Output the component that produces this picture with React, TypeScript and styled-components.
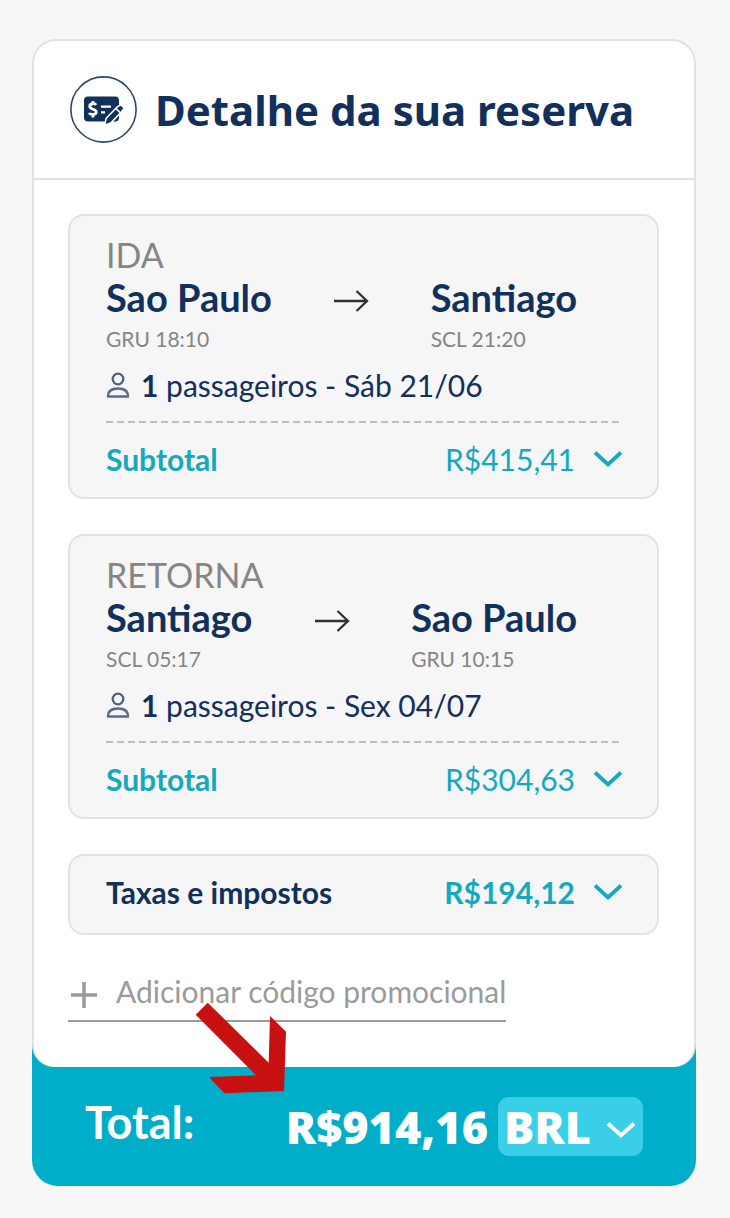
import React, { useState } from "react";
import styled, { createGlobalStyle } from "styled-components";

const navy = "#12305c";
const teal = "#14a9c0";
const bar = "#00aeca";
const line = "#e2e2e2";
const body = `Lato, "Liberation Sans", sans-serif`;
const display = `"Noto Sans", "Open Sans", sans-serif`;

const GlobalStyle = createGlobalStyle`
  * { box-sizing: border-box; }
  body { margin: 0; background: #f7f7f7; font-family: ${body}; color: ${navy}; }
  button, select { font: inherit; color: inherit; }
`;

const Page = styled.main`
  padding: 39px 34px 32px 32px;
`;

const Summary = styled.section`
  background: ${bar};
  border-radius: 26px;
`;

const Card = styled.div`
  background: #fff;
  border: 2px solid ${line};
  border-bottom: 0;
  border-radius: 24px 24px 22px 22px;
`;

/* Grey backing keeps the page colour behind the card's upper corners. */
const Backing = styled.div`
  background: linear-gradient(#f7f7f7 0 50%, transparent 50%);
`;

const Header = styled.header`
  display: flex;
  align-items: center;
  gap: 18px;
  height: 139px;
  padding: 0 36px;
  border-bottom: 2px solid ${line};
`;

const Title = styled.h1`
  margin: 0;
  font-family: ${display};
  font-size: 42px;
  line-height: 50px;
  font-weight: 700;
  white-space: nowrap;
`;

const Content = styled.div`
  display: flex;
  flex-direction: column;
  align-items: stretch;
  gap: 35px;
  padding: 34px 35px 45px 34px;
`;

const Panel = styled.section<{ $compact?: boolean }>`
  background: #f6f6f6;
  border: 2px solid ${line};
  border-radius: 16px;
  padding: ${(p) => (p.$compact ? "18px 34px 23px 36px" : "19px 34px 20px 36px")};
`;

const Direction = styled.h2`
  margin: 0;
  font-size: 34px;
  line-height: 40px;
  font-weight: 400;
  color: #858585;
`;

const Route = styled.div`
  display: flex;
  align-items: flex-start;
  justify-content: space-between;
  padding-right: 46px;
`;

const City = styled.div`
  font-size: 38px;
  line-height: 44px;
  font-weight: 700;
`;

const Schedule = styled.div`
  font-size: 21px;
  line-height: 40px;
  color: #858585;
`;

const ArrowBox = styled.span`
  display: flex;
  align-items: center;
  height: 52px;
`;

const Passengers = styled.p`
  display: flex;
  align-items: center;
  gap: 10px;
  margin: 8px 0 18px;
  font-size: 30px;
  line-height: 36px;
`;

const Divider = styled.hr`
  height: 2px;
  margin: 0 0 18px;
  border: 0;
  background: repeating-linear-gradient(90deg, #bdbdbd 0 7px, transparent 7px 11px);
`;

const AmountRow = styled.button<{ $strong?: boolean }>`
  display: flex;
  align-items: center;
  width: 100%;
  padding: 0;
  border: 0;
  background: none;
  font-size: 30px;
  line-height: 36px;
  text-align: left;
  font-weight: ${(p) => (p.$strong ? 700 : 400)};
  color: ${teal};
  cursor: pointer;
`;

const AmountLabel = styled.span<{ $dark?: boolean }>`
  flex: 1;
  font-weight: 700;
  color: ${(p) => (p.$dark ? navy : teal)};
`;

const Amount = styled.span`
  margin-right: 18px;
`;

const Promo = styled.button`
  display: flex;
  align-items: flex-end;
  align-self: flex-start;
  gap: 18px;
  margin-top: 3px;
  padding: 0 0 11px 2px;
  border: 0;
  border-bottom: 2px solid #9b9b9b;
  background: none;
  font-size: 30px;
  line-height: 36px;
  color: #9b9b9b;
  cursor: pointer;
`;

const Total = styled.footer`
  position: relative;
  display: flex;
  align-items: center;
  justify-content: space-between;
  height: 119px;
  padding: 0 53px;
  color: #fff;
  font-size: 45px;
  line-height: 54px;
`;

const TotalLabel = styled.span`
  padding-bottom: 10px;
  font-weight: 700;
`;

const TotalValue = styled.div`
  display: flex;
  align-items: center;
  gap: 10px;
  font-family: "Open Sans", "Noto Sans", sans-serif;
  font-weight: 800;
`;

const Currency = styled.label`
  display: grid;
  align-items: center;
  border-radius: 11px;
  background: #3acfe8;

  & > * { grid-area: 1 / 1; }
  & > svg { justify-self: end; margin: 6px 7px 0 0; pointer-events: none; }
`;

const CurrencySelect = styled.select`
  appearance: none;
  width: 145px;
  height: 59px;
  padding: 0 0 0 6px;
  border: 0;
  background: transparent;
  cursor: pointer;
`;

const Pointer = styled.svg`
  position: absolute;
  left: 163px;
  top: -65px;
  pointer-events: none;
`;

const Chevron = ({ color = teal }: { color?: string }) => (
  <svg width="30" height="18" viewBox="0 0 30 18" fill="none" aria-hidden="true">
    <path d="M2 2.5 15 14.5 28 2.5" stroke={color} strokeWidth="3.8" />
  </svg>
);

const RightArrow = () => (
  <svg width="36" height="24" viewBox="0 0 36 24" fill="none" aria-hidden="true">
    <path d="M1 12H34M23.500 2 34 12 23.500 22" stroke="#33312e" strokeWidth="2.300" />
  </svg>
);

const Person = () => (
  <svg width="25" height="28" viewBox="0 0 25 28" fill="none" aria-hidden="true">
    <circle cx="12" cy="8" r="5.300" stroke="#4f617f" strokeWidth="2.300" />
    <path
      d="M2 25.500C2 19.500 6.500 17.500 12 17.500S22 19.500 22 25.500Z"
      stroke="#5c6c88"
      strokeWidth="2.400"
      strokeLinejoin="round"
    />
  </svg>
);

const Plus = () => (
  <svg width="28" height="28" viewBox="0 0 28 28" fill="none" aria-hidden="true">
    <path d="M14 1V27M1 14H27" stroke="#9b9b9b" strokeWidth="3.600" />
  </svg>
);

const BookingIcon = () => (
  <svg width="67" height="67" viewBox="0 0 67 67" fill="none" aria-hidden="true">
    <circle cx="33.500" cy="33.500" r="32.600" stroke="#2c4770" strokeWidth="1.600" />
    <rect x="14" y="20.500" width="35" height="25" rx="4" fill={navy} />
    <path
      d="M26 29C25 27 19.700 27.200 19.700 30.300C19.700 34 26.200 32.500 26.200 36C26.200 39.300 20.400 39 19 37M22.900 25V28.500M22.900 38V41.500"
      stroke="#fff"
      strokeWidth="2.800"
    />
    <path d="M31 30.700H41M31 36.400H35" stroke="#fff" strokeWidth="2.300" />
    <path
      d="M34.500 49.500 36.200 42.300 47 31.200 50 29.200C51.800 28.800 54.300 31.300 53.800 33L51.500 35.800 41 46.800Z"
      fill={navy}
      stroke="#fff"
      strokeWidth="1.600"
    />
    <path d="M45.800 32.300 50.600 37.100" stroke="#fff" strokeWidth="1.500" />
  </svg>
);

type Leg = {
  direction: string;
  from: [string, string];
  to: [string, string];
  date: string;
  subtotal: string;
};

const legs: Leg[] = [
  { direction: "IDA", from: ["Sao Paulo", "GRU 18:10"], to: ["Santiago", "SCL 21:20"], date: "Sáb 21/06", subtotal: "R$415,41" },
  { direction: "RETORNA", from: ["Santiago", "SCL 05:17"], to: ["Sao Paulo", "GRU 10:15"], date: "Sex 04/07", subtotal: "R$304,63" },
];

const Stop = ({ place }: { place: [string, string] }) => (
  <div>
    <City>{place[0]}</City>
    <Schedule>{place[1]}</Schedule>
  </div>
);

const LegPanel = ({ leg }: { leg: Leg }) => (
  <Panel>
    <Direction>{leg.direction}</Direction>
    <Route>
      <Stop place={leg.from} />
      <ArrowBox>
        <RightArrow />
      </ArrowBox>
      <Stop place={leg.to} />
    </Route>
    <Passengers>
      <Person />
      <span>
        <b>1</b> passageiros - {leg.date}
      </span>
    </Passengers>
    <Divider />
    <AmountRow type="button">
      <AmountLabel>Subtotal</AmountLabel>
      <Amount>{leg.subtotal}</Amount>
      <Chevron />
    </AmountRow>
  </Panel>
);

export default function App() {
  const [currency, setCurrency] = useState("BRL");
  return (
    <Page>
      <GlobalStyle />
      <Summary>
        <Backing>
          <Card>
            <Header>
              <BookingIcon />
              <Title>Detalhe da sua reserva</Title>
            </Header>
            <Content>
              {legs.map((leg) => (
                <LegPanel key={leg.direction} leg={leg} />
              ))}
              <Panel $compact>
                <AmountRow type="button" $strong>
                  <AmountLabel $dark>Taxas e impostos</AmountLabel>
                  <Amount>R$194,12</Amount>
                  <Chevron />
                </AmountRow>
              </Panel>
              <Promo type="button">
                <Plus />
                Adicionar código promocional
              </Promo>
            </Content>
          </Card>
        </Backing>
        <Total>
          <TotalLabel>Total:</TotalLabel>
          <TotalValue>
            <span>R$914,16</span>
            <Currency>
              <CurrencySelect
                aria-label="Moeda"
                value={currency}
                onChange={(e) => setCurrency(e.target.value)}
              >
                <option>BRL</option>
                <option>USD</option>
              </CurrencySelect>
              <Chevron color="#fff" />
            </Currency>
          </TotalValue>
          <Pointer width="92" height="92" viewBox="0 0 92 92" aria-hidden="true">
            <path
              d="M12.700.700 73.700 60.700 75 14 91 29.700 89 89 29.300 91.300 14 75 61 73.300.700 12.700Z"
              fill="#c81010"
            />
          </Pointer>
        </Total>
      </Summary>
    </Page>
  );
}
